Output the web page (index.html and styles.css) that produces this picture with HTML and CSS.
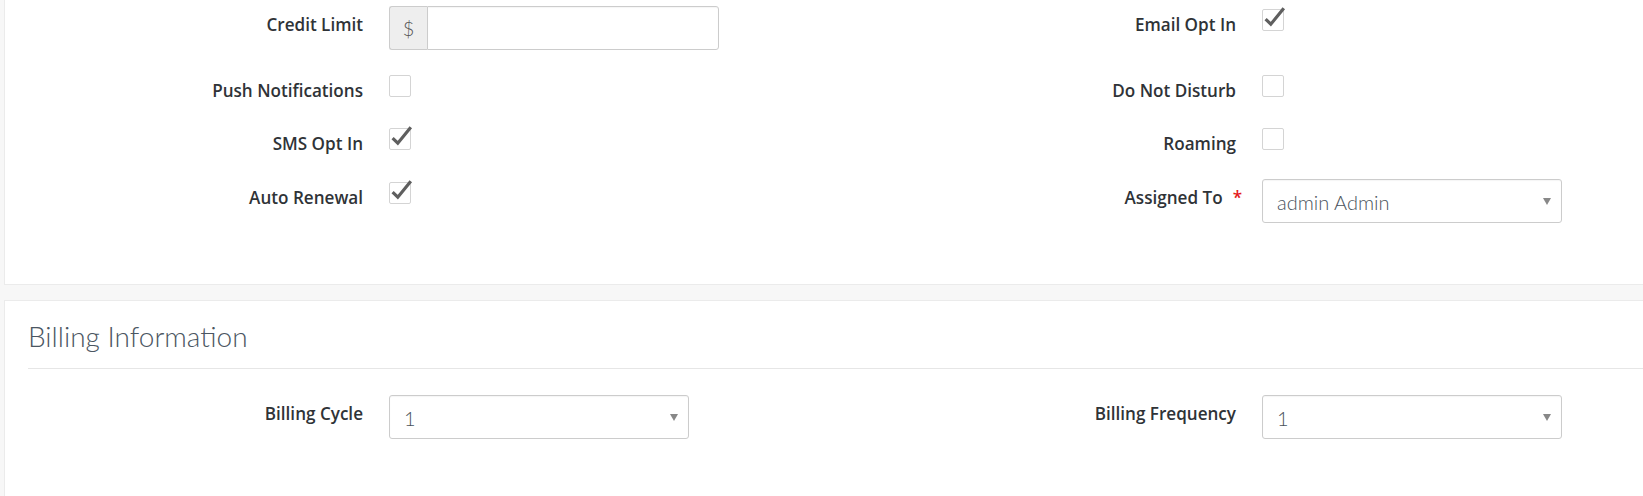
FILE: index.html
```html
<!DOCTYPE html>
<html lang="en">
<head>
<meta charset="utf-8">
<title>Account Form</title>
<link rel="stylesheet" href="styles.css">
</head>
<body>
<div class="page">
  <section class="panel panel-top">
    <div class="form-grid rows-top">
      <label class="lbl">Credit Limit</label>
      <div class="ctl">
        <div class="input-group">
          <span class="addon">$</span>
          <input class="input" type="text" value="">
        </div>
      </div>
      <label class="lbl">Email Opt In</label>
      <div class="ctl"><span class="cb"><svg class="tick" viewBox="0 0 26 28" width="26" height="28"><path d="M3.6 15.2 L8.8 20.2 L21.8 4.2"/></svg></span></div>

      <label class="lbl">Push Notifications</label>
      <div class="ctl"><span class="cb"></span></div>
      <label class="lbl">Do Not Disturb</label>
      <div class="ctl"><span class="cb"></span></div>

      <label class="lbl">SMS Opt In</label>
      <div class="ctl"><span class="cb"><svg class="tick" viewBox="0 0 26 28" width="26" height="28"><path d="M3.6 15.2 L8.8 20.2 L21.8 4.2"/></svg></span></div>
      <label class="lbl">Roaming</label>
      <div class="ctl"><span class="cb"></span></div>

      <label class="lbl">Auto Renewal</label>
      <div class="ctl"><span class="cb"><svg class="tick" viewBox="0 0 26 28" width="26" height="28"><path d="M3.6 15.2 L8.8 20.2 L21.8 4.2"/></svg></span></div>
      <label class="lbl">Assigned To<span class="req">*</span></label>
      <div class="ctl">
        <div class="select"><span class="select-text">admin Admin</span><span class="caret"></span></div>
      </div>
    </div>
  </section>

  <section class="panel panel-billing">
    <h3 class="panel-title">Billing Information</h3>
    <div class="divider"></div>
    <div class="form-grid rows-billing">
      <label class="lbl">Billing Cycle</label>
      <div class="ctl">
        <div class="select"><span class="select-text">1</span><span class="caret"></span></div>
      </div>
      <label class="lbl">Billing Frequency</label>
      <div class="ctl">
        <div class="select"><span class="select-text">1</span><span class="caret"></span></div>
      </div>
    </div>
  </section>
</div>
</body>
</html>
```

FILE: styles.css
```css
html, body {
  margin: 0;
  padding: 0;
  background: #f7f7f7;
  overflow: hidden;
}

.page {
  width: 100%;
  overflow: hidden;
  font-family: "Lato", "Liberation Sans", sans-serif;
  color: #333;
}

.panel {
  margin-left: 4px;
  margin-right: -40px;
  background: #fff;
  border: 1px solid #ebebeb;
  border-right: none;
  padding-left: 23px;
}

.panel-top {
  border-top: none;
  padding-top: 6px;
  padding-bottom: 61px;
}

.panel-billing {
  margin-top: 15px;
  padding-top: 20px;
  padding-bottom: 80px;
}

.panel-title {
  margin: 0 0 17px 0;
  font-family: "Lato", sans-serif;
  font-weight: 300;
  font-size: 28px;
  line-height: 30px;
  color: #4b5662;
}

.divider {
  height: 1px;
  background: #e6e6e6;
  margin-bottom: 26px;
}

.form-grid {
  display: grid;
  grid-template-columns: 335px 538px 335px 1fr;
  row-gap: 22px;
  align-items: start;
}

.rows-top {
  grid-template-rows: 44px 31px 32px 44px;
}

.rows-billing {
  grid-template-rows: 44px;
}

.lbl {
  display: block;
  text-align: right;
  font-family: "Open Sans", "Lato", sans-serif;
  font-weight: 600;
  font-size: 17.1px;
  line-height: 20px;
  padding-top: 9px;
  color: #2f3337;
  white-space: nowrap;
}

.req {
  color: #e41b1b;
  margin-left: 10px;
  margin-right: -6px;
}

.ctl {
  padding-left: 26px;
}

.input-group {
  display: flex;
  width: 330px;
  height: 44px;
  box-sizing: border-box;
}

.addon {
  width: 38px;
  box-sizing: border-box;
  display: flex;
  align-items: center;
  justify-content: center;
  background: #eeeeee;
  border: 1px solid #cccccc;
  border-right: none;
  border-radius: 3px 0 0 3px;
  font-family: "Lato", sans-serif;
  font-weight: 300;
  font-size: 20px;
  color: #555;
}

.input {
  flex: 1;
  min-width: 0;
  margin: 0;
  box-sizing: border-box;
  height: 44px;
  border: 1px solid #cccccc;
  border-radius: 0 3px 3px 0;
  padding: 0 12px;
  font-family: "Lato", sans-serif;
  font-size: 16px;
  outline: none;
  box-shadow: inset 0 1px 1px rgba(0, 0, 0, 0.04);
}

.cb {
  position: relative;
  display: block;
  margin-top: 3px;
  width: 22px;
  height: 22px;
  box-sizing: border-box;
  border: 1px solid #d4d4d4;
  border-radius: 2px;
  background: #fff;
}

.tick {
  position: absolute;
  left: -1px;
  top: -6px;
  overflow: visible;
}

.tick path {
  fill: none;
  stroke: #5f5f5f;
  stroke-width: 3.2;
  stroke-linejoin: miter;
}

.select {
  display: flex;
  align-items: center;
  justify-content: space-between;
  width: 300px;
  height: 44px;
  box-sizing: border-box;
  border: 1px solid #cccccc;
  border-radius: 3px;
  background: #fff;
  padding: 0 10px 0 14px;
  box-shadow: inset 0 1px 1px rgba(0, 0, 0, 0.04);
}

.select-text {
  font-family: "Lato", sans-serif;
  font-weight: 300;
  font-size: 20px;
  color: #4a535c;
  padding-top: 2px;
}

.caret {
  width: 0;
  height: 0;
  border-left: 4.5px solid transparent;
  border-right: 4.5px solid transparent;
  border-top: 7px solid #888;
}
```
